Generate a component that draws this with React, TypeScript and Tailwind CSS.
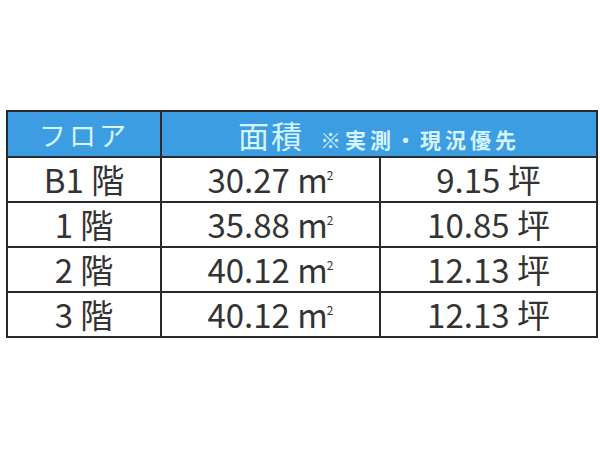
import React from "react";

const rows = [
  { floor: "B1 階", area: "30.27", tsubo: "9.15 坪" },
  { floor: "1 階", area: "35.88", tsubo: "10.85 坪" },
  { floor: "2 階", area: "40.12", tsubo: "12.13 坪" },
  { floor: "3 階", area: "40.12", tsubo: "12.13 坪" },
];

export default function App() {
  return (
    <div
      className="w-[600px] h-[450px] bg-white pt-[110px] pl-[6px]"
      style={{ fontFamily: '"Noto Sans CJK JP", "Noto Sans", sans-serif' }}
    >
      <table className="w-[590px] border-collapse border-2 border-[#2a2a2a] table-fixed">
        <colgroup>
          <col className="w-[154px]" />
          <col className="w-[219px]" />
          <col className="w-[217px]" />
        </colgroup>
        <thead>
          <tr className="h-[46px] bg-[#3c9de2]">
            <th className="border-2 border-[#2a2a2a] p-0 text-center font-normal text-[#d6f6ff] text-[27px] tracking-[3px] leading-none">
              フロア
            </th>
            <th
              colSpan={2}
              className="border-2 border-[#2a2a2a] p-0 text-center font-normal text-[#d6f6ff] leading-none"
            >
              <span className="text-[31px] tracking-[2px]">面積</span>
              <span className="ml-[16px] text-[21px] font-bold tracking-[4px]">
                ※実測・現況優先
              </span>
            </th>
          </tr>
        </thead>
        <tbody>
          {rows.map((r) => (
            <tr key={r.floor} className="h-[45px]">
              <td className="border-2 border-[#2a2a2a] p-0 text-center text-[33px] font-normal text-[#333333] leading-none">
                {r.floor}
              </td>
              <td className="border-2 border-[#2a2a2a] p-0 text-center text-[33px] font-normal text-[#333333] leading-none">
                {r.area} m<span className="relative -top-[13px] -ml-[1px] text-[12px]">2</span>
              </td>
              <td className="border-2 border-[#2a2a2a] p-0 text-center text-[33px] font-normal text-[#333333] leading-none">
                {r.tsubo}
              </td>
            </tr>
          ))}
        </tbody>
      </table>
    </div>
  );
}
